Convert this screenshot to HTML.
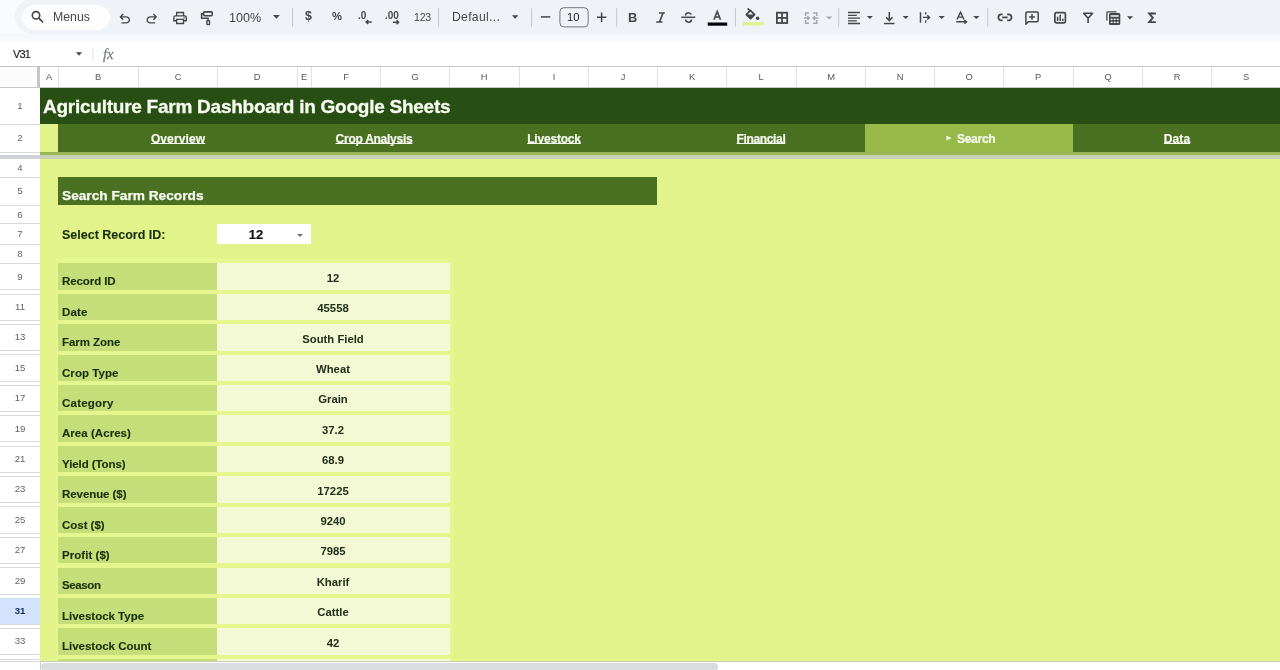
<!DOCTYPE html>
<html><head><meta charset="utf-8"><style>
*{box-sizing:border-box;margin:0;padding:0}
html,body{width:1280px;height:670px;overflow:hidden;background:#f9fbfd;font-family:"Liberation Sans",sans-serif;position:relative}
.a{position:absolute}
.t{position:absolute;white-space:nowrap;line-height:1;will-change:transform}
svg{position:absolute;overflow:visible}
</style></head><body>
<div class="a" style="left:15.00px;top:-1.00px;width:1300.00px;height:35.00px;background:#eff2f6;border-radius:17px"></div>
<div class="a" style="left:22.00px;top:5.00px;width:88.00px;height:25.00px;background:#fdfdfe;border-radius:13px"></div>
<svg style="left:0;top:0" width="1280" height="34" viewBox="0 0 1280 34" fill="none" stroke="#444746" stroke-width="1.6"><circle cx="36" cy="15.3" r="3.7"/><line x1="38.8" y1="18.1" x2="43" y2="22.3" stroke-width="1.7"/><path transform="translate(116.728 26.960) scale(0.0167)" d="M280-200v-80h284q63 0 109.5-40T720-420q0-60-46.5-100T564-560H312l104 104-56 56-200-200 200-200 56 56-104 104h252q97 0 166.5 63T800-420q0 94-69.5 157T564-200H280Z" fill="#444746" stroke="none"/><path transform="translate(143.828 26.960) scale(0.0167)" d="M396-200q-97 0-166.5-63T160-420q0-94 69.5-157T396-640h252L544-744l56-56 200 200-200 200-56-56 104-104H396q-63 0-109.5 40T240-420q0 60 46.5 100T396-280h284v80H396Z" fill="#444746" stroke="none"/><path transform="translate(171.824 26.248) scale(0.0172)" d="M640-640v-120H320v120h-80v-200h480v200h-80Zm-480 80h640-640Zm560 100q17 0 28.5-11.5T760-500q0-17-11.5-28.5T720-540q-17 0-28.5 11.5T680-500q0 17 11.5 28.5T720-460Zm-80 260v-160H320v160h320Zm80 80H240v-160H80v-240q0-51 35-85.5t85-34.5h560q51 0 85.5 34.5T880-520v240H720v160Zm80-240v-160q0-17-11.5-28.5T760-560H200q-17 0-28.5 11.5T160-520v160h80v-80h480v80h80Z" fill="#444746" stroke="none"/><rect x="203.6" y="11.9" width="8.6" height="3.9" rx="1" stroke-width="1.6"/><path d="M203.6 13.8H201.6V18.3H208.1V20.6" stroke-width="1.5"/><rect x="206.9" y="20.6" width="2.6" height="4" rx="0.5" stroke-width="1.4"/><path d="M273 15L279.8 15L276.4 18.8Z" fill="#444746" stroke="none"/><rect x="292.0" y="8.3" width="1" height="18.3" fill="#c7c7c7" stroke="none"/><path d="M512 15.3L518.3 15.3L515.15 18.8Z" fill="#444746" stroke="none"/><path d="M371.7 22.05H366.5M368.2 20.1L366.2 22.05L368.2 24" stroke-width="1.5"/><path d="M393 22.2H398.3M396.6 20.2L398.6 22.2L396.6 24.2" stroke-width="1.5"/><rect x="438.1" y="8.3" width="1" height="18.3" fill="#c7c7c7" stroke="none"/><rect x="531.1" y="8.3" width="1" height="18.3" fill="#c7c7c7" stroke="none"/><line x1="541" y1="16.9" x2="550.3" y2="16.9" stroke-width="1.5"/><rect x="559.9" y="7.7" width="28.3" height="19.2" rx="4" stroke="#747775" stroke-width="1"/><path d="M596.9 17.2H606.3M601.6 12.5V21.9" stroke-width="1.5"/><rect x="616.2" y="8.3" width="1" height="18.3" fill="#c7c7c7" stroke="none"/><path d="M659 13h5.8M656.2 22h6.3M663 13L659.5 22" stroke-width="1.6"/><path d="M681.3 17.3H695.3" stroke-width="1.5"/><path d="M685.6 15.6C685.6 13.6 687 12.7 688.4 12.7C689.8 12.7 690.9 13.4 691.2 14.6" stroke-width="1.6"/><path d="M685.6 19.5C685.8 21.2 687 22.2 688.6 22.2C690.3 22.2 691.5 21.2 691.5 19.6" stroke-width="1.6"/><path d="M713.9 19.8L717.2 11.5L720.5 19.8M715.1 17H719.3" stroke-width="1.6"/><rect x="707.7" y="22.5" width="19.5" height="3.2" fill="#000" stroke="none"/><rect x="735.0" y="8.3" width="1" height="18.3" fill="#c7c7c7" stroke="none"/><path d="M747.6 8.4L750.2 11" stroke-width="1.5"/><path d="M750.3 10.4L754.6 14.6L750.6 18.7L746.4 14.5Z" stroke-width="1.8" stroke-linejoin="round"/><path d="M746.4 14.5H754.6L750.6 18.7Z" fill="#444746" stroke="none"/><circle cx="757.6" cy="18.3" r="1.75" fill="#444746" stroke="none"/><rect x="743" y="22.1" width="20.6" height="3.3" fill="#e2f28a" stroke="none"/><rect x="776.9" y="12.7" width="10.3" height="10.3" stroke-width="1.8"/><path d="M782 12.7V23M776.9 17.85H787.2" stroke-width="1.8"/><g stroke="#a3a6a9" stroke-width="1.5"><path d="M809 12.9H805.6V15.9M805.6 20.1V23.2H809M813.2 12.9H816.8V15.9M816.8 20.1V23.2H813.2"/><path d="M804 18.1H809M807.4 16.3L809.2 18.1L807.4 19.9M818.4 18.1H813.4M815 16.3L813.2 18.1L815 19.9"/></g><path d="M826 16.5L832.4 16.5L829.2 19.5Z" fill="#a8abae" stroke="none"/><rect x="838.2" y="8.3" width="1" height="18.3" fill="#c7c7c7" stroke="none"/><path d="M848 12.5H860M848 15.3H856.8M848 18.1H860M848 20.8H856.8M848 23.5H860" stroke-width="1.3"/><path d="M866.9 16.1L872.9 16.1L869.9 19.1Z" fill="#444746" stroke="none"/><path d="M889.3 12V20.3M886.1 17.3L889.3 20.6L892.5 17.3M884.1 23.4H894.5" stroke-width="1.5"/><path d="M902.7 16.1L908.7 16.1L905.7 19.1Z" fill="#444746" stroke="none"/><path d="M920.5 12.3V22.7" stroke-width="1.5"/><path d="M925.7 12.3V14.6M925.7 20.2V22.7" stroke-width="1.3"/><path d="M923 17.4H929.6M927.3 15.2L929.6 17.4L927.3 19.6" stroke-width="1.4"/><path d="M938.5 16.1L944.8 16.1L941.65 19.1Z" fill="#444746" stroke="none"/><path d="M957 19.5L960.5 12.1L964 19.5M958.2 17.1H962.8" stroke-width="1.4"/><path d="M956.2 21.8H966.5M964.4 20L966.5 21.8L964.4 23.6" stroke-width="1.4"/><path d="M973.2 16.1L979.5 16.1L976.35 19.1Z" fill="#444746" stroke="none"/><rect x="987.2" y="8.3" width="1" height="18.3" fill="#c7c7c7" stroke="none"/><path d="M1002.6 14.4H1001.4A3 3 0 0 0 1001.4 20.4H1002.6M1007.2 14.4H1008.5A3 3 0 0 1 1008.5 20.4H1007.2M1002.2 17.4H1007.6" stroke-width="1.75"/><path d="M1025.9 24.2V13.1A1.2 1.2 0 0 1 1027.1 11.9H1037A1.2 1.2 0 0 1 1038.2 13.1V20.6A1.2 1.2 0 0 1 1037 21.8H1028.3Z" stroke-width="1.5" stroke-linejoin="round"/><path d="M1032 14V19.8M1029.1 16.9H1034.9" stroke-width="1.5"/><rect x="1054.9" y="12.6" width="10.5" height="10.3" rx="1.3" stroke-width="1.7"/><path d="M1057.6 16.8V21M1060.2 14.8V21M1062.8 18.8V21" stroke-width="1.5"/><path d="M1083.6 13.3H1092.6L1088.1 18.3ZM1088.1 18.3V22.9" stroke-width="1.6" stroke-linejoin="round"/><path d="M1106.9 20.5V12.8A1 1 0 0 1 1107.9 11.8H1116.5" stroke-width="1.3"/><rect x="1109" y="13.1" width="11.3" height="11.9" rx="1.5" fill="#444746" stroke="none"/><g fill="#eff2f6" stroke="none"><rect x="1110.6" y="15.2" width="8.1" height="1.6"/><rect x="1110.6" y="18.6" width="2" height="1.4"/><rect x="1113.7" y="18.6" width="2" height="1.4"/><rect x="1116.7" y="18.6" width="2" height="1.4"/><rect x="1110.6" y="21.6" width="2" height="1.4"/><rect x="1113.7" y="21.6" width="2" height="1.4"/><rect x="1116.7" y="21.6" width="2" height="1.4"/></g><path d="M1127 16.2L1133 16.2L1130.0 19.4Z" fill="#444746" stroke="none"/><path d="M1155.8 13.5H1149.2L1152.8 17.8L1149.2 22.1H1155.8" stroke-width="1.9" stroke-linejoin="miter"/></svg>
<div class="t" style="left:228.80px;top:11.60px;font-size:12.6px;color:#444746;">100%</div>
<div class="t" style="left:304.90px;top:10.30px;font-size:12.3px;color:#444746;font-weight:bold">$</div>
<div class="t" style="left:331.70px;top:11.00px;font-size:11.2px;color:#444746;font-weight:bold">%</div>
<div class="t" style="left:357.50px;top:11.20px;font-size:10px;color:#444746;font-weight:bold">.0</div>
<div class="t" style="left:385.00px;top:11.20px;font-size:10px;color:#444746;font-weight:bold">.00</div>
<div class="t" style="left:413.60px;top:11.60px;font-size:10.5px;color:#444746;letter-spacing:-0.2px">123</div>
<div class="t" style="left:451.60px;top:11.00px;font-size:12.2px;color:#444746;letter-spacing:0.3px">Defaul...</div>
<div class="t" style="left:566.70px;top:12.00px;font-size:11.2px;color:#1f1f1f;">10</div>
<div class="t" style="left:628.20px;top:11.90px;font-size:12.8px;color:#444746;font-weight:bold">B</div>
<div class="t" style="left:53.20px;top:11.30px;font-size:12.3px;color:#444746;">Menus</div>
<div class="a" style="left:0.00px;top:34.00px;width:1280.00px;height:8.00px;background:linear-gradient(#f2f6fb,#fbfcfe);"></div>
<div class="a" style="left:0.00px;top:42.00px;width:1280.00px;height:24.00px;background:#fff;"></div>
<div class="t" style="left:12.80px;top:49.40px;font-size:11px;color:#1f1f1f;letter-spacing:-0.8px;-webkit-text-stroke:0.15px #1f1f1f">V31</div>
<svg style="left:0;top:42px" width="130" height="24" viewBox="0 42 130 24"><path d="M76 52.2L82 52.2L79.0 55.7Z" fill="#444746" stroke="none"/><rect x="92.5" y="48" width="1" height="13.7" fill="#e3e3e3"/></svg>
<div class="t" style="left:103.20px;top:47.00px;font-size:14.6px;color:#7f8388;font-family:'Liberation Serif',serif;letter-spacing:0px;-webkit-text-stroke:0.3px #7f8388"><i>fx</i></div>
<div class="a" style="left:0.00px;top:66.00px;width:1280.00px;height:1.00px;background:#c7c7c7;"></div>
<div class="a" style="left:0.00px;top:67.00px;width:37.00px;height:20.00px;background:#fcfcfd;"></div>
<div class="a" style="left:37.00px;top:67.00px;width:3.00px;height:21.00px;background:#c6c6c6;"></div>
<div class="a" style="left:40.00px;top:67.00px;width:1240.00px;height:20.00px;background:#fff;"></div>
<div class="a" style="left:0.00px;top:87.00px;width:1280.00px;height:1.00px;background:#c7c7c7;"></div>
<div class="a" style="left:57.80px;top:67.00px;width:1.00px;height:20.00px;background:#e1e1e1;"></div>
<div class="t" style="left:-250.85px;width:600px;text-align:center;top:73.30px;font-size:9.3px;color:#555;">A</div>
<div class="a" style="left:137.90px;top:67.00px;width:1.00px;height:20.00px;background:#e1e1e1;"></div>
<div class="t" style="left:-201.65px;width:600px;text-align:center;top:73.30px;font-size:9.3px;color:#555;">B</div>
<div class="a" style="left:216.80px;top:67.00px;width:1.00px;height:20.00px;background:#e1e1e1;"></div>
<div class="t" style="left:-122.15px;width:600px;text-align:center;top:73.30px;font-size:9.3px;color:#555;">C</div>
<div class="a" style="left:296.80px;top:67.00px;width:1.00px;height:20.00px;background:#e1e1e1;"></div>
<div class="t" style="left:-42.70px;width:600px;text-align:center;top:73.30px;font-size:9.3px;color:#555;">D</div>
<div class="a" style="left:310.50px;top:67.00px;width:1.00px;height:20.00px;background:#e1e1e1;"></div>
<div class="t" style="left:4.15px;width:600px;text-align:center;top:73.30px;font-size:9.3px;color:#555;">E</div>
<div class="a" style="left:380.00px;top:67.00px;width:1.00px;height:20.00px;background:#e1e1e1;"></div>
<div class="t" style="left:45.88px;width:600px;text-align:center;top:73.30px;font-size:9.3px;color:#555;">F</div>
<div class="a" style="left:449.25px;top:67.00px;width:1.00px;height:20.00px;background:#e1e1e1;"></div>
<div class="t" style="left:115.12px;width:600px;text-align:center;top:73.30px;font-size:9.3px;color:#555;">G</div>
<div class="a" style="left:518.50px;top:67.00px;width:1.00px;height:20.00px;background:#e1e1e1;"></div>
<div class="t" style="left:184.38px;width:600px;text-align:center;top:73.30px;font-size:9.3px;color:#555;">H</div>
<div class="a" style="left:587.75px;top:67.00px;width:1.00px;height:20.00px;background:#e1e1e1;"></div>
<div class="t" style="left:253.62px;width:600px;text-align:center;top:73.30px;font-size:9.3px;color:#555;">I</div>
<div class="a" style="left:657.00px;top:67.00px;width:1.00px;height:20.00px;background:#e1e1e1;"></div>
<div class="t" style="left:322.88px;width:600px;text-align:center;top:73.30px;font-size:9.3px;color:#555;">J</div>
<div class="a" style="left:726.25px;top:67.00px;width:1.00px;height:20.00px;background:#e1e1e1;"></div>
<div class="t" style="left:392.12px;width:600px;text-align:center;top:73.30px;font-size:9.3px;color:#555;">K</div>
<div class="a" style="left:795.50px;top:67.00px;width:1.00px;height:20.00px;background:#e1e1e1;"></div>
<div class="t" style="left:461.38px;width:600px;text-align:center;top:73.30px;font-size:9.3px;color:#555;">L</div>
<div class="a" style="left:864.75px;top:67.00px;width:1.00px;height:20.00px;background:#e1e1e1;"></div>
<div class="t" style="left:530.62px;width:600px;text-align:center;top:73.30px;font-size:9.3px;color:#555;">M</div>
<div class="a" style="left:934.00px;top:67.00px;width:1.00px;height:20.00px;background:#e1e1e1;"></div>
<div class="t" style="left:599.88px;width:600px;text-align:center;top:73.30px;font-size:9.3px;color:#555;">N</div>
<div class="a" style="left:1003.25px;top:67.00px;width:1.00px;height:20.00px;background:#e1e1e1;"></div>
<div class="t" style="left:669.12px;width:600px;text-align:center;top:73.30px;font-size:9.3px;color:#555;">O</div>
<div class="a" style="left:1072.50px;top:67.00px;width:1.00px;height:20.00px;background:#e1e1e1;"></div>
<div class="t" style="left:738.38px;width:600px;text-align:center;top:73.30px;font-size:9.3px;color:#555;">P</div>
<div class="a" style="left:1141.75px;top:67.00px;width:1.00px;height:20.00px;background:#e1e1e1;"></div>
<div class="t" style="left:807.62px;width:600px;text-align:center;top:73.30px;font-size:9.3px;color:#555;">Q</div>
<div class="a" style="left:1211.00px;top:67.00px;width:1.00px;height:20.00px;background:#e1e1e1;"></div>
<div class="t" style="left:876.88px;width:600px;text-align:center;top:73.30px;font-size:9.3px;color:#555;">R</div>
<div class="a" style="left:1280.25px;top:67.00px;width:1.00px;height:20.00px;background:#e1e1e1;"></div>
<div class="t" style="left:946.12px;width:600px;text-align:center;top:73.30px;font-size:9.3px;color:#555;">S</div>
<div class="a" style="left:0.00px;top:88.00px;width:40.00px;height:573.00px;background:#fff;"></div>
<div class="a" style="left:39.50px;top:88.00px;width:1.00px;height:573.00px;background:#ececec;"></div>
<div class="a" style="left:40.00px;top:88.00px;width:1240.00px;height:573.00px;background:#e2f38b;"></div>
<div class="a" style="left:40.20px;top:88.00px;width:1239.80px;height:35.80px;background:#274e13;"></div>
<div class="t" style="left:42.80px;top:96.80px;font-size:19px;color:#f7fbef;font-weight:bold;letter-spacing:-0.25px;-webkit-text-stroke:0.3px #f7fbef">Agriculture Farm Dashboard in Google Sheets</div>
<div class="a" style="left:58.30px;top:124.00px;width:239.00px;height:28.00px;background:#4a7022;"></div>
<div class="t" style="left:-122.20px;width:600px;text-align:center;top:133.20px;font-size:12px;color:#f7fbef;font-weight:bold;text-decoration:underline;text-underline-offset:-0.4px;text-decoration-thickness:1px;text-decoration-skip-ink:none;letter-spacing:0.11px;-webkit-text-stroke:0.2px #f7fbef">Overview</div>
<div class="a" style="left:297.30px;top:124.00px;width:152.45px;height:28.00px;background:#4a7022;"></div>
<div class="t" style="left:73.52px;width:600px;text-align:center;top:133.20px;font-size:12px;color:#f7fbef;font-weight:bold;text-decoration:underline;text-underline-offset:-0.4px;text-decoration-thickness:1px;text-decoration-skip-ink:none;letter-spacing:-0.26px;-webkit-text-stroke:0.2px #f7fbef">Crop Analysis</div>
<div class="a" style="left:449.75px;top:124.00px;width:207.75px;height:28.00px;background:#4a7022;"></div>
<div class="t" style="left:253.62px;width:600px;text-align:center;top:133.20px;font-size:12px;color:#f7fbef;font-weight:bold;text-decoration:underline;text-underline-offset:-0.4px;text-decoration-thickness:1px;text-decoration-skip-ink:none;letter-spacing:-0.2px;-webkit-text-stroke:0.2px #f7fbef">Livestock</div>
<div class="a" style="left:657.50px;top:124.00px;width:207.75px;height:28.00px;background:#4a7022;"></div>
<div class="t" style="left:461.38px;width:600px;text-align:center;top:133.20px;font-size:12px;color:#f7fbef;font-weight:bold;text-decoration:underline;text-underline-offset:-0.4px;text-decoration-thickness:1px;text-decoration-skip-ink:none;letter-spacing:-0.36px;-webkit-text-stroke:0.2px #f7fbef">Financial</div>
<div class="a" style="left:865.25px;top:124.00px;width:207.75px;height:28.00px;background:#98ba4a;"></div>
<svg style="left:946px;top:135px" width="7" height="7" viewBox="946 135 7 7"><path d="M946.4 135.7L951.6 138.05L946.4 140.4Z" fill="#f7fbef"/></svg>
<div class="t" style="left:956.60px;top:133.20px;font-size:12px;color:#f7fbef;font-weight:bold;letter-spacing:-0.28px;-webkit-text-stroke:0.2px #f7fbef">Search</div>
<div class="a" style="left:1073.00px;top:124.00px;width:207.75px;height:28.00px;background:#4a7022;"></div>
<div class="t" style="left:876.88px;width:600px;text-align:center;top:133.20px;font-size:12px;color:#f7fbef;font-weight:bold;text-decoration:underline;text-underline-offset:-0.4px;text-decoration-thickness:1px;text-decoration-skip-ink:none;letter-spacing:0.07px;-webkit-text-stroke:0.2px #f7fbef">Data</div>
<div class="a" style="left:40.00px;top:152.00px;width:1240.00px;height:2.70px;background:#9ab553;"></div>
<div class="a" style="left:40.00px;top:154.70px;width:1240.00px;height:4.10px;background:#c8cfb5;"></div>
<div class="a" style="left:0.00px;top:152.00px;width:40.00px;height:1.00px;background:#d5d5d5;"></div>
<div class="a" style="left:0.00px;top:154.70px;width:40.00px;height:4.10px;background:#d0d1d8;"></div>
<div class="a" style="left:58.30px;top:177.40px;width:599.00px;height:27.40px;background:#4a7022;"></div>
<div class="t" style="left:62.30px;top:189.20px;font-size:13.7px;color:#f7fbef;font-weight:bold;-webkit-text-stroke:0.25px #f7fbef">Search Farm Records</div>
<div class="t" style="left:62.30px;top:228.50px;font-size:12.5px;color:#172f0a;font-weight:bold;-webkit-text-stroke:0.1px #172f0a">Select Record ID:</div>
<div class="a" style="left:217.30px;top:223.70px;width:93.40px;height:20.80px;background:#fff;"></div>
<div class="t" style="left:-44.00px;width:600px;text-align:center;top:227.80px;font-size:13px;color:#161616;font-weight:bold;-webkit-text-stroke:0.2px #161616">12</div>
<div class="a" style="left:297.4px;top:233.9px;width:0;height:0;border-left:3.8px solid transparent;border-right:3.8px solid transparent;border-top:3.7px solid #707070"></div>
<div class="a" style="left:56.00px;top:257.50px;width:398.00px;height:403.50px;background:#e5f68e;"></div>
<div class="a" style="left:58.30px;top:263.40px;width:158.70px;height:26.30px;background:#c5de79;"></div>
<div class="a" style="left:217.00px;top:263.40px;width:232.50px;height:26.30px;background:#f2f9d4;"></div>
<div class="t" style="left:62.00px;top:276.30px;font-size:11.5px;color:#172f0a;font-weight:bold;letter-spacing:-0.087px;-webkit-text-stroke:0.12px #172f0a">Record ID</div>
<div class="t" style="left:33.00px;width:600px;text-align:center;top:272.80px;font-size:11.3px;color:#22301a;font-weight:bold">12</div>
<div class="a" style="left:58.30px;top:293.81px;width:158.70px;height:26.30px;background:#c5de79;"></div>
<div class="a" style="left:217.00px;top:293.81px;width:232.50px;height:26.30px;background:#f2f9d4;"></div>
<div class="t" style="left:62.00px;top:306.71px;font-size:11.5px;color:#172f0a;font-weight:bold;letter-spacing:0.133px;-webkit-text-stroke:0.12px #172f0a">Date</div>
<div class="t" style="left:33.00px;width:600px;text-align:center;top:303.21px;font-size:11.3px;color:#22301a;font-weight:bold">45558</div>
<div class="a" style="left:58.30px;top:324.22px;width:158.70px;height:26.30px;background:#c5de79;"></div>
<div class="a" style="left:217.00px;top:324.22px;width:232.50px;height:26.30px;background:#f2f9d4;"></div>
<div class="t" style="left:62.00px;top:337.12px;font-size:11.5px;color:#172f0a;font-weight:bold;letter-spacing:-0.062px;-webkit-text-stroke:0.12px #172f0a">Farm Zone</div>
<div class="t" style="left:33.00px;width:600px;text-align:center;top:333.62px;font-size:11.3px;color:#22301a;font-weight:bold">South Field</div>
<div class="a" style="left:58.30px;top:354.63px;width:158.70px;height:26.30px;background:#c5de79;"></div>
<div class="a" style="left:217.00px;top:354.63px;width:232.50px;height:26.30px;background:#f2f9d4;"></div>
<div class="t" style="left:62.00px;top:367.53px;font-size:11.5px;color:#172f0a;font-weight:bold;letter-spacing:0.05px;-webkit-text-stroke:0.12px #172f0a">Crop Type</div>
<div class="t" style="left:33.00px;width:600px;text-align:center;top:364.03px;font-size:11.3px;color:#22301a;font-weight:bold">Wheat</div>
<div class="a" style="left:58.30px;top:385.04px;width:158.70px;height:26.30px;background:#c5de79;"></div>
<div class="a" style="left:217.00px;top:385.04px;width:232.50px;height:26.30px;background:#f2f9d4;"></div>
<div class="t" style="left:62.00px;top:397.94px;font-size:11.5px;color:#172f0a;font-weight:bold;letter-spacing:0.229px;-webkit-text-stroke:0.12px #172f0a">Category</div>
<div class="t" style="left:33.00px;width:600px;text-align:center;top:394.44px;font-size:11.3px;color:#22301a;font-weight:bold">Grain</div>
<div class="a" style="left:58.30px;top:415.45px;width:158.70px;height:26.30px;background:#c5de79;"></div>
<div class="a" style="left:217.00px;top:415.45px;width:232.50px;height:26.30px;background:#f2f9d4;"></div>
<div class="t" style="left:62.00px;top:428.35px;font-size:11.5px;color:#172f0a;font-weight:bold;letter-spacing:0.045px;-webkit-text-stroke:0.12px #172f0a">Area (Acres)</div>
<div class="t" style="left:33.00px;width:600px;text-align:center;top:424.85px;font-size:11.3px;color:#22301a;font-weight:bold">37.2</div>
<div class="a" style="left:58.30px;top:445.86px;width:158.70px;height:26.30px;background:#c5de79;"></div>
<div class="a" style="left:217.00px;top:445.86px;width:232.50px;height:26.30px;background:#f2f9d4;"></div>
<div class="t" style="left:62.00px;top:458.76px;font-size:11.5px;color:#172f0a;font-weight:bold;letter-spacing:-0.082px;-webkit-text-stroke:0.12px #172f0a">Yield (Tons)</div>
<div class="t" style="left:33.00px;width:600px;text-align:center;top:455.26px;font-size:11.3px;color:#22301a;font-weight:bold">68.9</div>
<div class="a" style="left:58.30px;top:476.27px;width:158.70px;height:26.30px;background:#c5de79;"></div>
<div class="a" style="left:217.00px;top:476.27px;width:232.50px;height:26.30px;background:#f2f9d4;"></div>
<div class="t" style="left:62.00px;top:489.17px;font-size:11.5px;color:#172f0a;font-weight:bold;letter-spacing:-0.07px;-webkit-text-stroke:0.12px #172f0a">Revenue ($)</div>
<div class="t" style="left:33.00px;width:600px;text-align:center;top:485.67px;font-size:11.3px;color:#22301a;font-weight:bold">17225</div>
<div class="a" style="left:58.30px;top:506.68px;width:158.70px;height:26.30px;background:#c5de79;"></div>
<div class="a" style="left:217.00px;top:506.68px;width:232.50px;height:26.30px;background:#f2f9d4;"></div>
<div class="t" style="left:62.00px;top:519.58px;font-size:11.5px;color:#172f0a;font-weight:bold;letter-spacing:-0.029px;-webkit-text-stroke:0.12px #172f0a">Cost ($)</div>
<div class="t" style="left:33.00px;width:600px;text-align:center;top:516.08px;font-size:11.3px;color:#22301a;font-weight:bold">9240</div>
<div class="a" style="left:58.30px;top:537.09px;width:158.70px;height:26.30px;background:#c5de79;"></div>
<div class="a" style="left:217.00px;top:537.09px;width:232.50px;height:26.30px;background:#f2f9d4;"></div>
<div class="t" style="left:62.00px;top:549.99px;font-size:11.5px;color:#172f0a;font-weight:bold;letter-spacing:0.044px;-webkit-text-stroke:0.12px #172f0a">Profit ($)</div>
<div class="t" style="left:33.00px;width:600px;text-align:center;top:546.49px;font-size:11.3px;color:#22301a;font-weight:bold">7985</div>
<div class="a" style="left:58.30px;top:567.50px;width:158.70px;height:26.30px;background:#c5de79;"></div>
<div class="a" style="left:217.00px;top:567.50px;width:232.50px;height:26.30px;background:#f2f9d4;"></div>
<div class="t" style="left:62.00px;top:580.40px;font-size:11.5px;color:#172f0a;font-weight:bold;letter-spacing:-0.38px;-webkit-text-stroke:0.12px #172f0a">Season</div>
<div class="t" style="left:33.00px;width:600px;text-align:center;top:576.90px;font-size:11.3px;color:#22301a;font-weight:bold">Kharif</div>
<div class="a" style="left:58.30px;top:597.91px;width:158.70px;height:26.30px;background:#c5de79;"></div>
<div class="a" style="left:217.00px;top:597.91px;width:232.50px;height:26.30px;background:#f2f9d4;"></div>
<div class="t" style="left:62.00px;top:610.81px;font-size:11.5px;color:#172f0a;font-weight:bold;letter-spacing:-0.015px;-webkit-text-stroke:0.12px #172f0a">Livestock Type</div>
<div class="t" style="left:33.00px;width:600px;text-align:center;top:607.31px;font-size:11.3px;color:#22301a;font-weight:bold">Cattle</div>
<div class="a" style="left:58.30px;top:628.32px;width:158.70px;height:26.30px;background:#c5de79;"></div>
<div class="a" style="left:217.00px;top:628.32px;width:232.50px;height:26.30px;background:#f2f9d4;"></div>
<div class="t" style="left:62.00px;top:641.22px;font-size:11.5px;color:#172f0a;font-weight:bold;letter-spacing:-0.007px;-webkit-text-stroke:0.12px #172f0a">Livestock Count</div>
<div class="t" style="left:33.00px;width:600px;text-align:center;top:637.72px;font-size:11.3px;color:#22301a;font-weight:bold">42</div>
<div class="a" style="left:58.30px;top:658.73px;width:158.70px;height:2.27px;background:#c5de79;"></div>
<div class="a" style="left:217.00px;top:658.73px;width:232.50px;height:2.27px;background:#f2f9d4;"></div>
<div class="t" style="left:-280.20px;width:600px;text-align:center;top:101.10px;font-size:9.6px;color:#5f6368;">1</div>
<div class="a" style="left:0.00px;top:123.90px;width:39.50px;height:1.00px;background:#dadada;"></div>
<div class="t" style="left:-280.20px;width:600px;text-align:center;top:132.90px;font-size:9.6px;color:#5f6368;">2</div>
<div class="a" style="left:0.00px;top:151.50px;width:39.50px;height:1.00px;background:#dadada;"></div>
<div class="t" style="left:-280.20px;width:600px;text-align:center;top:162.95px;font-size:9.6px;color:#5f6368;">4</div>
<div class="a" style="left:0.00px;top:176.80px;width:39.50px;height:1.00px;background:#dadada;"></div>
<div class="t" style="left:-280.20px;width:600px;text-align:center;top:186.30px;font-size:9.6px;color:#5f6368;">5</div>
<div class="a" style="left:0.00px;top:205.00px;width:39.50px;height:1.00px;background:#dadada;"></div>
<div class="t" style="left:-280.20px;width:600px;text-align:center;top:209.50px;font-size:9.6px;color:#5f6368;">6</div>
<div class="a" style="left:0.00px;top:223.20px;width:39.50px;height:1.00px;background:#dadada;"></div>
<div class="t" style="left:-280.20px;width:600px;text-align:center;top:229.05px;font-size:9.6px;color:#5f6368;">7</div>
<div class="a" style="left:0.00px;top:244.10px;width:39.50px;height:1.00px;background:#dadada;"></div>
<div class="t" style="left:-280.20px;width:600px;text-align:center;top:248.90px;font-size:9.6px;color:#5f6368;">8</div>
<div class="a" style="left:0.00px;top:262.90px;width:39.50px;height:1.00px;background:#dadada;"></div>
<div class="t" style="left:-280.20px;width:600px;text-align:center;top:271.55px;font-size:9.6px;color:#5f6368;">9</div>
<div class="a" style="left:0.00px;top:289.40px;width:39.50px;height:1.00px;background:#dadada;"></div>
<div class="a" style="left:0.00px;top:293.60px;width:39.50px;height:1.00px;background:#dadada;"></div>
<div class="t" style="left:-280.20px;width:600px;text-align:center;top:301.96px;font-size:9.6px;color:#5f6368;">11</div>
<div class="a" style="left:0.00px;top:319.81px;width:39.50px;height:1.00px;background:#dadada;"></div>
<div class="a" style="left:0.00px;top:324.01px;width:39.50px;height:1.00px;background:#dadada;"></div>
<div class="t" style="left:-280.20px;width:600px;text-align:center;top:332.37px;font-size:9.6px;color:#5f6368;">13</div>
<div class="a" style="left:0.00px;top:350.22px;width:39.50px;height:1.00px;background:#dadada;"></div>
<div class="a" style="left:0.00px;top:354.42px;width:39.50px;height:1.00px;background:#dadada;"></div>
<div class="t" style="left:-280.20px;width:600px;text-align:center;top:362.78px;font-size:9.6px;color:#5f6368;">15</div>
<div class="a" style="left:0.00px;top:380.63px;width:39.50px;height:1.00px;background:#dadada;"></div>
<div class="a" style="left:0.00px;top:384.83px;width:39.50px;height:1.00px;background:#dadada;"></div>
<div class="t" style="left:-280.20px;width:600px;text-align:center;top:393.19px;font-size:9.6px;color:#5f6368;">17</div>
<div class="a" style="left:0.00px;top:411.04px;width:39.50px;height:1.00px;background:#dadada;"></div>
<div class="a" style="left:0.00px;top:415.24px;width:39.50px;height:1.00px;background:#dadada;"></div>
<div class="t" style="left:-280.20px;width:600px;text-align:center;top:423.60px;font-size:9.6px;color:#5f6368;">19</div>
<div class="a" style="left:0.00px;top:441.45px;width:39.50px;height:1.00px;background:#dadada;"></div>
<div class="a" style="left:0.00px;top:445.65px;width:39.50px;height:1.00px;background:#dadada;"></div>
<div class="t" style="left:-280.20px;width:600px;text-align:center;top:454.01px;font-size:9.6px;color:#5f6368;">21</div>
<div class="a" style="left:0.00px;top:471.86px;width:39.50px;height:1.00px;background:#dadada;"></div>
<div class="a" style="left:0.00px;top:476.06px;width:39.50px;height:1.00px;background:#dadada;"></div>
<div class="t" style="left:-280.20px;width:600px;text-align:center;top:484.42px;font-size:9.6px;color:#5f6368;">23</div>
<div class="a" style="left:0.00px;top:502.27px;width:39.50px;height:1.00px;background:#dadada;"></div>
<div class="a" style="left:0.00px;top:506.47px;width:39.50px;height:1.00px;background:#dadada;"></div>
<div class="t" style="left:-280.20px;width:600px;text-align:center;top:514.83px;font-size:9.6px;color:#5f6368;">25</div>
<div class="a" style="left:0.00px;top:532.68px;width:39.50px;height:1.00px;background:#dadada;"></div>
<div class="a" style="left:0.00px;top:536.88px;width:39.50px;height:1.00px;background:#dadada;"></div>
<div class="t" style="left:-280.20px;width:600px;text-align:center;top:545.24px;font-size:9.6px;color:#5f6368;">27</div>
<div class="a" style="left:0.00px;top:563.09px;width:39.50px;height:1.00px;background:#dadada;"></div>
<div class="a" style="left:0.00px;top:567.29px;width:39.50px;height:1.00px;background:#dadada;"></div>
<div class="t" style="left:-280.20px;width:600px;text-align:center;top:575.65px;font-size:9.6px;color:#5f6368;">29</div>
<div class="a" style="left:0.00px;top:593.50px;width:39.50px;height:1.00px;background:#dadada;"></div>
<div class="a" style="left:0.00px;top:597.70px;width:39.50px;height:1.00px;background:#dadada;"></div>
<div class="a" style="left:0.00px;top:597.91px;width:39.50px;height:26.50px;background:#d3e3fd;"></div>
<div class="t" style="left:-280.20px;width:600px;text-align:center;top:606.06px;font-size:9.6px;color:#0b2a5b;font-weight:bold">31</div>
<div class="a" style="left:0.00px;top:623.91px;width:39.50px;height:1.00px;background:#dadada;"></div>
<div class="a" style="left:0.00px;top:628.11px;width:39.50px;height:1.00px;background:#dadada;"></div>
<div class="t" style="left:-280.20px;width:600px;text-align:center;top:636.47px;font-size:9.6px;color:#5f6368;">33</div>
<div class="a" style="left:0.00px;top:654.32px;width:39.50px;height:1.00px;background:#dadada;"></div>
<div class="a" style="left:0.00px;top:658.52px;width:39.50px;height:1.00px;background:#dadada;"></div>
<div class="a" style="left:0.00px;top:661.00px;width:1280.00px;height:9.00px;background:#fff;"></div>
<div class="a" style="left:40.00px;top:661.00px;width:1240.00px;height:1.00px;background:#c9cfb4;"></div>
<div class="a" style="left:0.00px;top:661.20px;width:40.00px;height:1.00px;background:#dadada;"></div>
<div class="a" style="left:39.50px;top:661.00px;width:1.00px;height:9.00px;background:#d0d0d0;"></div>
<div class="a" style="left:41.00px;top:663.00px;width:677.00px;height:8.00px;background:#dadce0;border-radius:4px"></div>
</body></html>
